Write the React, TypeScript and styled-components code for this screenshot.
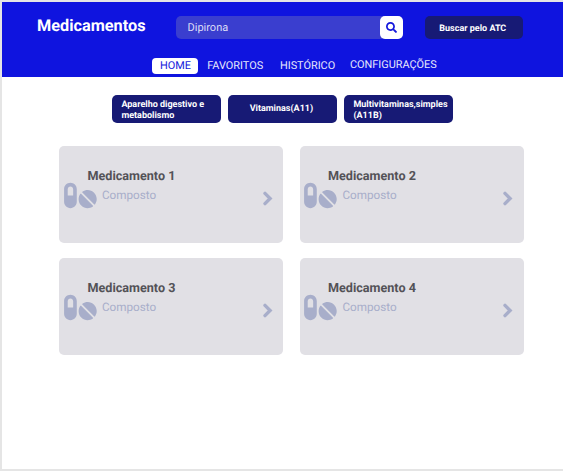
import React from "react";
import styled, { createGlobalStyle } from "styled-components";
import { FaPills, FaSearch } from "react-icons/fa";

const GlobalStyle = createGlobalStyle`
  * { box-sizing: border-box; }
  body { margin: 0; background: #fff; font-family: Roboto, "Liberation Sans", sans-serif; text-rendering: geometricPrecision; }
  button, input { font-family: inherit; border: 0; margin: 0; padding: 0; text-rendering: inherit; }
  h1, h2, p { margin: 0; }
`;

const Page = styled.div`
  width: 563px;
  height: 471px;
  border: solid #e5e5e5;
  border-width: 2px 0 2px 2px;
  background: #fff;
  overflow: hidden;
`;

const Header = styled.header`
  height: 75px;
  background: #0f14df;
  color: #fff;
`;

const TopBar = styled.div`
  display: flex;
  align-items: flex-start;
  height: 56px;
  padding: 14px 0 0 35px;
`;

const Brand = styled.h1`
  width: 139px;
  font-size: 16.3px;
  line-height: 20px;
  font-weight: 700;
  white-space: nowrap;
`;

const SearchField = styled.form`
  display: flex;
  width: 227.3px;
  height: 23px;
  border-radius: 5px;
  background: #3a3ecf;
`;

const SearchInput = styled.input`
  flex: 1;
  min-width: 0;
  padding-left: 11.5px;
  background: transparent;
  color: #dcdcf6;
  font-size: 11px;
  outline: none;
`;

const SearchButton = styled.button`
  display: flex;
  align-items: center;
  justify-content: center;
  width: 23.3px;
  height: 23px;
  border-radius: 5px;
  background: #fff;
  color: #1418dc;
`;

const AtcButton = styled.button`
  width: 98px;
  height: 23px;
  margin-left: 22px;
  padding: 2px 3px 0 0;
  border-radius: 5px;
  background: #171a75;
  color: #fff;
  font-size: 9px;
  font-weight: 700;
`;

const Nav = styled.nav`
  display: flex;
  align-items: flex-start;
  height: 19px;
  padding-left: 149.5px;
`;

const NavItem = styled.a<{ $active?: boolean; $gap?: number; $raise?: number }>`
  height: ${(p) => (p.$active ? 15.5 : 16)}px;
  margin-left: ${(p) => p.$gap ?? 0}px;
  margin-top: ${(p) => -(p.$raise ?? 0)}px;
  padding: ${(p) => (p.$active ? "0 7px 0 8.5px" : "0")};
  border-radius: 4px;
  background: ${(p) => (p.$active ? "#fff" : "transparent")};
  color: ${(p) => (p.$active ? "#1418dc" : "#e6e7fc")};
  font-size: 10.9px;
  line-height: 15px;
  white-space: nowrap;
`;

const Filters = styled.div`
  display: flex;
  gap: 7px;
  padding: 18px 0 0 110.4px;
`;

const Filter = styled.button<{ $centered?: boolean }>`
  display: flex;
  align-items: center;
  justify-content: ${(p) => (p.$centered ? "center" : "flex-start")};
  width: 109px;
  height: 28px;
  padding: ${(p) => (p.$centered ? "0 3px 0 0" : "3px 0 0 9px")};
  border-radius: 5px;
  background: #171a75;
  color: #fff;
  font-size: 9px;
  line-height: 10.5px;
  font-weight: 700;
  text-align: left;
  white-space: pre;
`;

const Cards = styled.main`
  display: grid;
  grid-template-columns: 224px 224px;
  grid-auto-rows: 97px;
  gap: 15px 16.5px;
  padding: 23px 0 0 57px;
`;

const Card = styled.article`
  display: flex;
  justify-content: space-between;
  padding: 22px 10.5px 0 4.9px;
  border-radius: 5px;
  background: #e1e0e5;
  color: #a8aeca;
`;

const CardTitle = styled.h2`
  margin-left: 23.6px;
  color: #535257;
  font-size: 12.6px;
  line-height: 17px;
  font-weight: 700;
`;

const Compound = styled.div`
  display: flex;
  align-items: flex-start;
  gap: 5.3px;
  margin-top: -4px;
`;

const PillsIcon = styled(FaPills)`
  width: 32.8px;
  height: 29px;
`;

const CompoundName = styled.p`
  margin-top: 7px;
  font-size: 11.7px;
  line-height: 14px;
`;

const ArrowIcon = styled.svg`
  width: 10px;
  height: 15px;
  margin-top: 23px;
  fill: none;
  stroke: currentColor;
  stroke-width: 3.4;
  stroke-linecap: round;
  stroke-linejoin: miter;
`;

const medicines = ["Medicamento 1", "Medicamento 2", "Medicamento 3", "Medicamento 4"];

export default function App() {
  return (
    <>
      <GlobalStyle />
      <Page>
        <Header>
          <TopBar>
            <Brand>Medicamentos</Brand>
            <SearchField>
              <SearchInput defaultValue="Dipirona" aria-label="Buscar medicamento" />
              <SearchButton type="button" aria-label="Buscar">
                <FaSearch size={11} />
              </SearchButton>
            </SearchField>
            <AtcButton>Buscar pelo ATC</AtcButton>
          </TopBar>
          <Nav>
            <NavItem $active>HOME</NavItem>
            <NavItem $gap={9.2}>FAVORITOS</NavItem>
            <NavItem $gap={16.8}>HISTÓRICO</NavItem>
            <NavItem $gap={14.7} $raise={1}>CONFIGURAÇÕES</NavItem>
          </Nav>
        </Header>
        <Filters>
          <Filter>{"Aparelho digestivo e\nmetabolismo"}</Filter>
          <Filter $centered>Vitaminas(A11)</Filter>
          <Filter>{"Multivitaminas,simples\n(A11B)"}</Filter>
        </Filters>
        <Cards>
          {medicines.map((name) => (
            <Card key={name}>
              <div>
                <CardTitle>{name}</CardTitle>
                <Compound>
                  <PillsIcon />
                  <CompoundName>Composto</CompoundName>
                </Compound>
              </div>
              <ArrowIcon viewBox="0 0 10 15" aria-hidden="true">
                <path d="M2 2.4 7.1 7.5 2 12.6" />
              </ArrowIcon>
            </Card>
          ))}
        </Cards>
      </Page>
    </>
  );
}
